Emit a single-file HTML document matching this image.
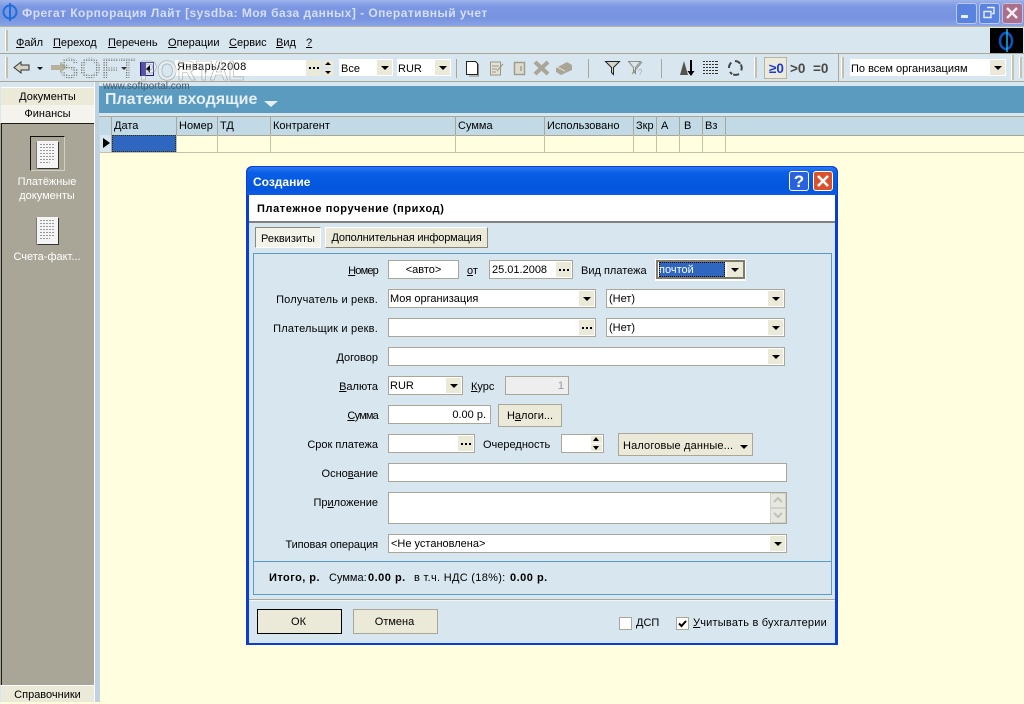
<!DOCTYPE html>
<html><head><meta charset="utf-8">
<style>
html,body{margin:0;padding:0}
body{width:1024px;height:702px;position:relative;overflow:hidden;background:#ffffe0;font:11px "Liberation Sans","Noto Sans CJK SC",sans-serif;color:#000}
div,span.t,svg{position:absolute}
.t{position:absolute;white-space:nowrap;line-height:14px}
.r{position:absolute;white-space:nowrap;line-height:14px;left:250px;width:128px;text-align:right}
.f{position:absolute;background:#fff;border:1px solid #aaa698;box-sizing:border-box;white-space:nowrap;line-height:19px;padding-left:1px;height:19px}
.a{position:absolute;right:1px;top:1px;width:15px;height:15px;background:#ebe9d8}
.a:after{content:"";position:absolute;left:4px;top:6px;border:4px solid transparent;border-top:4px solid #000;border-bottom:0}
.d{position:absolute;right:1px;top:1px;width:15px;height:15px;background:#ebe9d8}
.d:after{content:"";position:absolute;left:3px;top:7px;width:2px;height:2px;background:#000;box-shadow:4px 0 0 #000,8px 0 0 #000}
.b{position:absolute;background:#ebe9d8;border:1px solid #aaa698;box-sizing:border-box;text-align:center;white-space:nowrap}
.h{position:absolute;top:116px;height:19px;border-right:1px solid #aaa698;box-sizing:border-box;line-height:21px;padding-left:2px;white-space:nowrap}
.c{position:absolute;top:135px;height:18px;border-right:1px solid #c4c0ac;box-sizing:border-box}
u{text-decoration:underline}
</style></head><body>

<!-- title bar -->
<div style="left:0;top:0;width:1024px;height:26px;background:linear-gradient(#9db3ec 0,#7c97e2 25%,#7793e0 70%,#8aa3e6 100%)"></div>
<svg style="left:1px;top:2px" width="18" height="20" viewBox="0 0 18 20"><ellipse cx="9" cy="10" rx="6.5" ry="6.5" fill="none" stroke="#1e6fd8" stroke-width="2"/><path d="M9 1v18" stroke="#1e6fd8" stroke-width="2"/></svg>
<span class="t" style="left:22px;top:6px;font-size:12px;font-weight:bold;color:#d5dff7;letter-spacing:.45px">Фрегат Корпорация Лайт [sysdba: Моя база данных] - Оперативный учет</span>
<div style="left:956px;top:3px;width:19px;height:19px;background:#5a82e0;border:1px solid #b9caf0;border-radius:3px"></div>
<div style="left:961px;top:15px;width:7px;height:3px;background:#e8eefc"></div>
<div style="left:979px;top:3px;width:19px;height:19px;background:#5a82e0;border:1px solid #b9caf0;border-radius:3px"></div>
<svg style="left:982px;top:6px" width="14" height="14"><path d="M5 1.500h7v6h-2M2 5.500h7v6H2z" fill="none" stroke="#e8eefc" stroke-width="1.400"/></svg>
<div style="left:1002px;top:3px;width:19px;height:19px;background:#a8708c;border:1px solid #d5bcd0;border-radius:3px"></div>
<svg style="left:1004px;top:5px" width="16" height="16"><path d="M3 3l10 10M13 3L3 13" stroke="#f6eef2" stroke-width="2.400"/></svg>

<!-- menu -->
<div style="left:0;top:26px;width:1024px;height:1px;background:#b8b49e"></div>
<div style="left:0;top:27px;width:1024px;height:27px;background:#d8e6ef"></div>
<div style="left:0;top:53px;width:1024px;height:1px;background:#aaa698"></div>
<div style="left:5px;top:30px;width:2px;height:21px;background:#c4c0ac;border-left:1px solid #fff"></div>
<span class="t" style="left:16px;top:36px"><u>Ф</u>айл</span>
<span class="t" style="left:53px;top:36px"><u>П</u>ереход</span>
<span class="t" style="left:108px;top:36px"><u>П</u>еречень</span>
<span class="t" style="left:168px;top:36px"><u>О</u>перации</span>
<span class="t" style="left:229px;top:36px"><u>С</u>ервис</span>
<span class="t" style="left:276px;top:36px"><u>В</u>ид</span>
<span class="t" style="left:306px;top:36px"><u>?</u></span>
<div style="left:990px;top:28px;width:33px;height:25px;background:#000"></div>
<svg style="left:990px;top:28px" width="33" height="25"><ellipse cx="16" cy="13" rx="6" ry="8" fill="none" stroke="#0a55c8" stroke-width="2.500"/><path d="M17 1v23" stroke="#19b4e8" stroke-width="1.500"/></svg>

<!-- toolbar -->
<div style="left:0;top:54px;width:1024px;height:27px;background:#d8e6ef"></div>
<div style="left:0;top:81px;width:1024px;height:1px;background:#aaa698"></div>
<div style="left:5px;top:57px;width:2px;height:21px;background:#c4c0ac;border-left:1px solid #fff"></div>
<svg style="left:13px;top:60px" width="18" height="15"><path d="M1 7.500L8 2v3h8v5H8v3z" fill="#d6d3c2" stroke="#333" stroke-width="1"/></svg>
<div style="left:37px;top:67px;border:3px solid transparent;border-top:3px solid #111;border-bottom:0;width:0;height:0"></div>
<svg style="left:50px;top:60px" width="18" height="15"><path d="M1 5h9V2l7 5.500L10 13v-3H1z" fill="#b5b19c"/></svg>
<div style="left:121px;top:67px;border:3px solid transparent;border-top:3px solid #333;border-bottom:0;width:0;height:0"></div>
<div style="left:140px;top:62px;width:12px;height:12px;border:1px solid #1a1a8c;background:#dfe6f4"></div>
<div style="left:140px;top:62px;width:6px;height:13px;background:#1a1a8c"></div>
<div style="left:146px;top:65px;border:4px solid transparent;border-right:4px solid #000;border-left:0;width:0;height:0"></div>
<div style="left:175px;top:60px;width:146px;height:16px;background:#fff"></div>
<span class="t" style="left:177px;top:60px;font-size:11px;letter-spacing:.4px">Январь/2008</span>
<svg style="left:56px;top:52px" width="195" height="32">
<defs><pattern id="p" width="2.500" height="2.500" patternUnits="userSpaceOnUse"><rect width="1.300" height="1.300" fill="#77776c"/></pattern></defs>
<text x="4" y="26" font-family="Liberation Sans" font-weight="bold" font-size="29" fill="url(#p)" textLength="76" lengthAdjust="spacingAndGlyphs">SOFT</text>
<text x="84" y="28" font-family="Liberation Sans" font-weight="bold" font-size="28" fill="#ffffff" fill-opacity=".25" stroke="#8f8f86" stroke-width=".6" stroke-opacity=".8" textLength="104" lengthAdjust="spacingAndGlyphs">PORTAL</text>
</svg>
<div style="left:306px;top:60px;width:15px;height:16px;background:#ebe9d8"></div>
<div style="left:309px;top:67px;width:2px;height:2px;background:#000;box-shadow:4px 0 0 #000,8px 0 0 #000"></div>
<div style="left:323px;top:60px;width:11px;height:7px;background:#ebe9d8"></div>
<div style="left:325px;top:62px;border:3px solid transparent;border-bottom:3px solid #000;border-top:0;width:0;height:0"></div>
<div style="left:323px;top:69px;width:11px;height:7px;background:#ebe9d8"></div>
<div style="left:325px;top:71px;border:3px solid transparent;border-top:3px solid #000;border-bottom:0;width:0;height:0"></div>

<div style="left:339px;top:59px;width:54px;height:17px;background:#fff"></div>
<span class="t" style="left:341px;top:62px">Все</span>
<div style="left:377px;top:60px;width:15px;height:15px;background:#ebe9d8"></div>
<div style="left:381px;top:66px;border:4px solid transparent;border-top:4px solid #000;border-bottom:0;width:0;height:0"></div>
<div style="left:397px;top:59px;width:54px;height:17px;background:#fff"></div>
<span class="t" style="left:398px;top:62px">RUR</span>
<div style="left:435px;top:60px;width:15px;height:15px;background:#ebe9d8"></div>
<div style="left:439px;top:66px;border:4px solid transparent;border-top:4px solid #000;border-bottom:0;width:0;height:0"></div>
<div style="left:456px;top:59px;width:1px;height:19px;background:#aaa698"></div>
<svg style="left:465px;top:60px" width="16" height="17"><path d="M1.500 1.500h9l2 2v11h-11z" fill="#fff" stroke="#222"/><path d="M13.500 4v12H4" stroke="#888" fill="none"/></svg>
<svg style="left:489px;top:60px" width="16" height="17"><path d="M1.500 2h10v13h-10z" fill="#e4e2d6" stroke="#9a9786"/><path d="M3 6h7M3 9h5M3 12h4M8 11l6-7" stroke="#9a9786" fill="none"/></svg>
<svg style="left:513px;top:61px" width="13" height="15"><path d="M1.500 1.500h10v12h-10z" fill="#dedcd0" stroke="#a19e8e" stroke-width="1.500"/><path d="M8 5v5" stroke="#a19e8e" stroke-width="1.500"/></svg>
<svg style="left:533px;top:60px" width="17" height="16"><path d="M2 2l13 12M15 2L2 14" stroke="#a9a697" stroke-width="4"/></svg>
<svg style="left:555px;top:60px" width="18" height="16"><path d="M1 8l11-6 5 3v5L6 15 1 12z" fill="#a9a697"/><path d="M2 7l8 4" stroke="#dfddd0"/></svg>
<div style="left:588px;top:59px;width:1px;height:19px;background:#aaa698"></div>
<svg style="left:604px;top:60px" width="18" height="16"><path d="M1.500 1.500h14l-6 6v7l-2-2v-5z" fill="#d7d5c7" stroke="#222"/></svg>
<svg style="left:627px;top:60px" width="18" height="16"><path d="M1.500 1.500h12l-5 6v6l-2-2v-4z" fill="none" stroke="#8f8c7c"/><path d="M5 14L15 2" stroke="#8f8c7c"/><text x="11" y="15" font-size="8" fill="#aaa">?</text></svg>
<div style="left:661px;top:59px;width:1px;height:19px;background:#aaa698"></div>
<svg style="left:679px;top:59px" width="16" height="18"><path d="M5 2l4 14H1z" fill="#55534a"/><path d="M12 1v14" stroke="#000" stroke-width="2"/><path d="M8.500 12h7L12 17z" fill="#000"/></svg>
<svg style="left:703px;top:61px" width="15" height="14"><path d="M0 .5h15M0 3.500h15M0 6.500h15M0 9.500h15M0 12.500h15" stroke="#333"/><path d="M2.500 0v14M5.500 0v14M8.500 0v14M11.500 0v14" stroke="#d8e6ef"/></svg>
<svg style="left:727px;top:59px" width="16" height="18"><path d="M8 2a7 7 0 0 1 6 10M12 15a7 7 0 0 1-9-2M2 9a7 7 0 0 1 3-6" fill="none" stroke="#444" stroke-width="2" stroke-dasharray="6 1"/></svg>
<div style="left:754px;top:57px;width:2px;height:21px;background:#c4c0ac;border-left:1px solid #fff"></div>
<div style="left:764px;top:57px;width:23px;height:22px;background:#eceadd;border:1px solid #b8b49e;box-sizing:border-box"></div>
<span class="t" style="left:769px;top:62px;font-size:13.500px;font-weight:bold;color:#1b3bd0">≥0</span>
<span class="t" style="left:790px;top:62px;font-size:13.500px;font-weight:bold;color:#4a4a44">&gt;0</span>
<span class="t" style="left:813px;top:62px;font-size:13.500px;font-weight:bold;color:#4a4a44">=0</span>
<div style="left:838px;top:54px;width:1px;height:27px;background:#aaa698"></div>
<div style="left:841px;top:57px;width:2px;height:21px;background:#c4c0ac;border-left:1px solid #fff"></div>
<div style="left:850px;top:59px;width:156px;height:17px;background:#fff"></div>
<span class="t" style="left:851px;top:62px">По всем организациям</span>
<div style="left:990px;top:60px;width:15px;height:15px;background:#ebe9d8"></div>
<div style="left:994px;top:66px;border:4px solid transparent;border-top:4px solid #000;border-bottom:0;width:0;height:0"></div>
<div style="left:1011px;top:55px;width:2px;height:25px;background:#c4c0ac;border-left:1px solid #fff"></div>
<div style="left:1019px;top:57px;width:2px;height:21px;background:#c4c0ac;border-left:1px solid #fff"></div>

<!-- left panel -->
<div style="left:0;top:82px;width:99px;height:620px;background:#d8e6ef"></div>
<div style="left:1px;top:87px;width:93px;height:18px;background:#ebe9d8;border-top:1px solid #fff;box-sizing:border-box;text-align:center;line-height:18px">Документы</div>
<div style="left:1px;top:105px;width:93px;height:18px;background:#f4f3ec;text-align:center;line-height:19px">Финансы</div>
<div style="left:0;top:123px;width:95px;height:562px;background:#a9a698"></div>
<div style="left:1px;top:123px;width:93px;height:1px;background:#1c1c1c"></div>
<div style="left:1px;top:123px;width:1px;height:562px;background:#1c1c1c"></div>
<div style="left:30px;top:136px;width:35px;height:35px;box-sizing:border-box;border:1px solid;border-color:#111 #d2d0c4 #d2d0c4 #111"></div>
<div style="left:37px;top:141px;width:21px;height:27px;background:#f4f4f4;box-shadow:1px 1px 0 #333,-1px 1px 0 #777"></div>
<svg style="left:39px;top:143px" width="17" height="23"><path d="M1 1.500h14M1 4.500h14M1 7.500h14M1 10.500h14M1 13.500h14M1 16.500h14M1 19.500h10" stroke="#9a9a9a" stroke-dasharray="2 1"/></svg>
<div style="left:0;top:175px;width:94px;text-align:center;color:#fff;line-height:14px">Платёжные<br>документы</div>
<div style="left:37px;top:217px;width:21px;height:27px;background:#f4f4f4;box-shadow:1px 1px 0 #333,-1px 1px 0 #777"></div>
<svg style="left:39px;top:219px" width="17" height="23"><path d="M1 1.500h14M1 4.500h14M1 7.500h14M1 10.500h14M1 13.500h14M1 16.500h14M1 19.500h10" stroke="#9a9a9a" stroke-dasharray="2 1"/></svg>
<div style="left:0;top:250px;width:94px;text-align:center;color:#fff;line-height:14px">Счета-факт...</div>
<div style="left:1px;top:685px;width:93px;height:17px;background:#ebe9d8;border-top:1px solid #fff;box-sizing:border-box;text-align:center;line-height:18px">Справочники</div>
<div style="left:94px;top:82px;width:1px;height:620px;background:#fff"></div>
<div style="left:95px;top:82px;width:4px;height:620px;background:#c0d2e0"></div>

<!-- header band -->
<div style="left:99px;top:82px;width:925px;height:4px;background:#d8e6ef"></div>
<div style="left:99px;top:86px;width:925px;height:27px;background:#5a9bbf"></div>
<div style="left:99px;top:113px;width:925px;height:3px;background:#d8e6ef"></div>
<span class="t" style="left:105px;top:91px;font-size:16px;font-weight:bold;line-height:18px;color:#e6f0f6">Платежи входящие</span>
<div style="left:264px;top:101px;border:7px solid transparent;border-top:6px solid #e6f0f6;border-bottom:0;width:0;height:0"></div>
<span class="t" style="left:103px;top:81px;font-size:10px;color:#4a5a66;line-height:12px">www.softportal.com</span>

<!-- grid -->
<div style="left:99px;top:116px;width:925px;height:19px;background:#c2d9e6;border-top:1px solid #aaa698;box-sizing:border-box"></div>
<div class="h" style="left:99px;width:13px"></div>
<div class="h" style="left:112px;width:65px">Дата</div>
<div class="h" style="left:177px;width:41px">Номер</div>
<div class="h" style="left:218px;width:53px">ТД</div>
<div class="h" style="left:271px;width:185px">Контрагент</div>
<div class="h" style="left:456px;width:89px">Сумма</div>
<div class="h" style="left:545px;width:89px">Использовано</div>
<div class="h" style="left:634px;width:23px">Зкр</div>
<div class="h" style="left:657px;width:23px;padding-left:4px">А</div>
<div class="h" style="left:680px;width:23px;padding-left:4px">В</div>
<div class="h" style="left:703px;width:23px">Вз</div>
<div style="left:99px;top:135px;width:925px;height:1px;background:#aaa698"></div>
<div style="left:99px;top:135px;width:13px;height:18px;background:#d8e6ef;border-right:1px solid #aaa698;box-sizing:border-box"></div>
<div style="left:103px;top:138px;border:5px solid transparent;border-left:7px solid #000;border-right:0;width:0;height:0"></div>
<div style="left:112px;top:135px;width:64px;height:17px;background:#2f67c0;outline:1px dotted #3a3000;outline-offset:-1px"></div>
<div class="c" style="left:112px;width:65px"></div>
<div class="c" style="left:177px;width:41px"></div>
<div class="c" style="left:218px;width:53px"></div>
<div class="c" style="left:271px;width:185px"></div>
<div class="c" style="left:456px;width:89px"></div>
<div class="c" style="left:545px;width:89px"></div>
<div class="c" style="left:634px;width:23px"></div>
<div class="c" style="left:657px;width:23px"></div>
<div class="c" style="left:680px;width:23px"></div>
<div class="c" style="left:703px;width:23px"></div>
<div style="left:99px;top:152px;width:925px;height:1px;background:#c4c0ac"></div>
<div style="left:99px;top:135px;width:1px;height:567px;background:#c2d4e0"></div>

<!-- dialog -->
<div style="left:246px;top:166px;width:592px;height:479px;background:#0a3dd8;border-radius:6px 6px 0 0"></div>
<div style="left:247px;top:167px;width:590px;height:28px;background:linear-gradient(#2a7cf0 0,#0a5fe6 20%,#0355dc 75%,#0a5ce8 100%);border-radius:6px 6px 0 0"></div>
<span class="t" style="left:253px;top:175px;font-size:12px;font-weight:bold;color:#fff">Создание</span>
<div style="left:789px;top:171px;width:20px;height:20px;background:#2a62dc;border:1px solid #fff;border-radius:3px;box-sizing:border-box;color:#fff;font:bold 17px/19px 'Liberation Sans',sans-serif;text-align:center">?</div>
<div style="left:813px;top:171px;width:20px;height:20px;background:#d9522c;border:1px solid #fff;border-radius:3px;box-sizing:border-box"></div>
<svg style="left:813px;top:171px" width="20" height="20"><path d="M5 5l10 10M15 5L5 15" stroke="#fff" stroke-width="2.500"/></svg>
<div style="left:249px;top:195px;width:586px;height:448px;background:#d8e6ef"></div>
<div style="left:249px;top:195px;width:586px;height:26px;background:#fff"></div>
<div style="left:249px;top:221px;width:586px;height:2px;background:#808080"></div>
<span class="t" style="left:257px;top:202px;font-weight:bold;letter-spacing:.6px">Платежное поручение (приход)</span>

<div class="b" style="left:255px;top:227px;width:66px;height:21px;background:#f4f3ea;border:1px solid;border-color:#8a8878 #fff #fff #8a8878;line-height:22px">Реквизиты</div>
<div class="b" style="left:325px;top:227px;width:163px;height:21px;border:1px solid;border-color:#fff #8a8878 #8a8878 #fff;line-height:20px;letter-spacing:-.15px">Дополнительная информация</div>

<div style="left:253px;top:253px;width:579px;height:342px;border:1px solid #5a9bbf;box-sizing:border-box"></div>
<div style="left:253px;top:561px;width:579px;height:1px;background:#5a9bbf"></div>

<span class="r" style="top:264px;letter-spacing:-.8px"><u>Н</u>омер</span>
<div class="f" style="left:388px;top:260px;width:71px;text-align:center;padding:0">&lt;авто&gt;</div>
<span class="t" style="left:467px;top:264px"><u>о</u>т</span>
<div class="f" style="left:489px;top:260px;width:84px;padding-left:2px">25.01.2008<span class="d"></span></div>
<span class="t" style="left:581px;top:264px">Вид платежа</span>
<div style="left:655px;top:259px;width:91px;height:22px;background:#fff"></div>
<div style="left:656px;top:260px;width:89px;height:19px;border:2px solid #7f7c6c;box-sizing:border-box;background:#fff"></div>
<div style="left:659px;top:262px;width:66px;height:15px;background:#2f67c0;color:#fff;line-height:16px;outline:1px dotted #000;outline-offset:-1px">почтой</div>
<div class="a" style="left:727px;top:262px;right:auto;background:#ebe9d8;width:16px;box-shadow:1px 1px 0 #7f7c6c"></div>

<span class="r" style="top:293px;letter-spacing:.2px">Получатель и рекв.</span>
<div class="f" style="left:388px;top:289px;width:208px">Моя организация<span class="a"></span></div>
<div class="f" style="left:606px;top:289px;width:179px;padding-left:2px">(Нет)<span class="a"></span></div>

<span class="r" style="top:322px;letter-spacing:.2px">Плательщик и рекв.</span>
<div class="f" style="left:388px;top:318px;width:208px"><span class="d"></span></div>
<div class="f" style="left:606px;top:318px;width:179px;padding-left:2px">(Нет)<span class="a"></span></div>

<span class="r" style="top:351px">Договор</span>
<div class="f" style="left:388px;top:347px;width:397px"><span class="a"></span></div>

<span class="r" style="top:380px"><u>В</u>алюта</span>
<div class="f" style="left:388px;top:376px;width:75px">RUR<span class="a"></span></div>
<span class="t" style="left:471px;top:380px"><u>К</u>урс</span>
<div class="f" style="left:505px;top:376px;width:64px;background:#eeeeee;color:#999;text-align:right;padding:0 4px 0 0">1</div>

<span class="r" style="top:409px;letter-spacing:-.8px"><u>С</u>умма</span>
<div class="f" style="left:388px;top:405px;width:103px;text-align:right;padding:0 4px 0 0">0.00 р.</div>
<div class="b" style="left:498px;top:404px;width:64px;height:23px;line-height:23px">Н<u>а</u>логи...</div>

<span class="r" style="top:438px">Срок платежа</span>
<div class="f" style="left:388px;top:434px;width:87px"><span class="d"></span></div>
<span class="t" style="left:483px;top:438px">Очередность</span>
<div class="f" style="left:561px;top:434px;width:43px"></div>
<div style="left:591px;top:436px;width:11px;height:7px;background:#ebe9d8"></div>
<div style="left:593px;top:437px;border:3px solid transparent;border-bottom:4px solid #000;border-top:0;width:0;height:0"></div>
<div style="left:591px;top:444px;width:11px;height:7px;background:#ebe9d8"></div>
<div style="left:593px;top:446px;border:3px solid transparent;border-top:4px solid #000;border-bottom:0;width:0;height:0"></div>
<div class="b" style="left:618px;top:433px;width:135px;height:23px;line-height:24px;text-align:left;padding-left:4px;letter-spacing:.15px">Налоговые данные...</div>
<div style="left:740px;top:445px;border:4px solid transparent;border-top:4px solid #000;border-bottom:0;width:0;height:0"></div>

<span class="r" style="top:467px">Осно<u>в</u>ание</span>
<div class="f" style="left:388px;top:463px;width:399px"></div>

<span class="r" style="top:496px">Пр<u>и</u>ложение</span>
<div class="f" style="left:388px;top:492px;width:399px;height:32px"></div>
<div style="left:770px;top:493px;width:16px;height:15px;background:#e6e8e0;border:1px solid #cfd2c8;box-sizing:border-box"></div>
<svg style="left:772px;top:496px" width="12" height="8"><path d="M2 6l4-4 4 4" fill="none" stroke="#c0c2b8" stroke-width="2"/></svg>
<div style="left:770px;top:508px;width:16px;height:15px;background:#e6e8e0;border:1px solid #cfd2c8;box-sizing:border-box"></div>
<svg style="left:772px;top:511px" width="12" height="8"><path d="M2 2l4 4 4-4" fill="none" stroke="#c0c2b8" stroke-width="2"/></svg>

<span class="r" style="top:538px;letter-spacing:-.1px">Типовая операция</span>
<div class="f" style="left:388px;top:534px;width:399px;padding-left:2px">&lt;Не установлена&gt;<span class="a"></span></div>

<span class="t" style="left:269px;top:571px;font-weight:bold;letter-spacing:.45px">Итого, р.</span>
<span class="t" style="left:329px;top:571px">Сумма:</span>
<span class="t" style="left:368px;top:571px;font-weight:bold;letter-spacing:.5px">0.00 р.</span>
<span class="t" style="left:414px;top:571px;letter-spacing:.3px">в т.ч. НДС (18%):</span>
<span class="t" style="left:510px;top:571px;font-weight:bold;letter-spacing:.5px">0.00 р.</span>

<div style="left:249px;top:599px;width:586px;height:1px;background:#aaa698"></div>
<div style="left:249px;top:600px;width:586px;height:1px;background:#f2f6f9"></div>
<div class="b" style="left:257px;top:609px;width:85px;height:25px;border-color:#000;line-height:25px;padding-right:2px">ОК</div>
<div class="b" style="left:353px;top:609px;width:85px;height:25px;line-height:25px;padding-right:2px">Отмена</div>

<div style="left:619px;top:617px;width:13px;height:13px;background:#fff;border:1px solid #aaa698;box-sizing:border-box"></div>
<span class="t" style="left:636px;top:616px">ДСП</span>
<div style="left:676px;top:617px;width:13px;height:13px;background:#fff;border:1px solid #aaa698;box-sizing:border-box"></div>
<svg style="left:676px;top:617px" width="13" height="13"><path d="M3 6.500l2.500 2.500L10 4" fill="none" stroke="#000" stroke-width="2"/></svg>
<span class="t" style="left:693px;top:616px;letter-spacing:.22px"><u>У</u>читывать в бухгалтерии</span>
</body></html>
